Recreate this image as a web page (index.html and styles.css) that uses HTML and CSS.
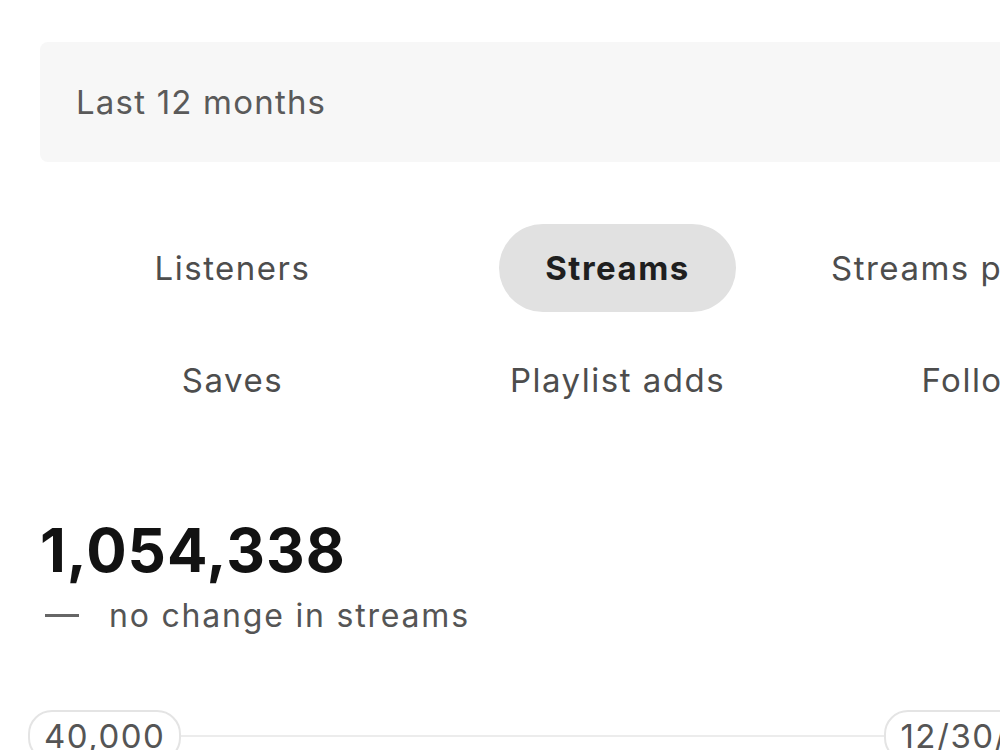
FILE: index.html
```html
<!DOCTYPE html>
<html lang="en">
<head>
    <meta charset="UTF-8">
    <meta name="viewport" content="width=device-width, initial-scale=1.0">
    <title>Stats</title>
    <link rel="stylesheet" href="styles.css">
</head>
<body>

    <div class="page">
        <div class="range-select">Last 12 months</div>

        <div class="tabs">
            <button class="tab">Listeners</button>
            <button class="tab active">Streams</button>
            <button class="tab">Streams per listener</button>
            <button class="tab">Saves</button>
            <button class="tab">Playlist adds</button>
            <button class="tab">Followers</button>
        </div>

        <div class="total">1,054,338</div>
        <div class="change">
            <span class="dash"></span>
            <span>no change in streams</span>
        </div>

        <!-- Chart top row: axis label, grid line, date marker -->
        <div class="chart-top">
            <span class="chip">40,000</span>
            <span class="grid-line"></span>
            <span class="chip date">12/30/2024</span>
        </div>
    </div>

</body>
</html>
```

FILE: styles.css
```css
body {
    margin: 0;
    background-color: #ffffff;
    font-family: Inter, "Noto Sans", sans-serif;
    color: #222;
    overflow: hidden;
}

.page {
    width: 1160px;
    padding-left: 40px;
    padding-top: 42px;
}

.range-select {
    height: 120px;
    background-color: #f7f7f7;
    border-radius: 8px 0 0 8px;
    padding-left: 36px;
    display: flex;
    align-items: center;
    font-size: 33px;
    color: #5a5a5a;
    letter-spacing: 1.2px;
}

.tabs {
    display: grid;
    grid-template-columns: repeat(3, 385px);
    grid-auto-rows: 88px;
    row-gap: 24px;
    margin-top: 62px;
}

.tab {
    justify-self: center;
    height: 88px;
    padding: 0 46px;
    border: none;
    border-radius: 44px;
    background: none;
    font-family: inherit;
    font-size: 33px;
    color: #4d4d4d;
    white-space: nowrap;
    letter-spacing: 1.5px;
}

.tab.active {
    background-color: #e1e1e1;
    color: #1f1f1f;
    font-weight: 700;
}

.total {
    margin-top: 90px;
    font-size: 60px;
    font-weight: 700;
    color: #121212;
    line-height: 72px;
    letter-spacing: 1px;
}

.change {
    display: flex;
    align-items: center;
    gap: 30px;
    margin-top: 10px;
    padding-left: 5px;
    font-size: 32px;
    color: #555;
    letter-spacing: 1.8px;
}

.dash {
    width: 34px;
    height: 3px;
    background-color: #666;
}

.chart-top {
    display: flex;
    align-items: center;
    margin-top: 75px;
    margin-left: -12px;
}

.chip {
    border: 2px solid #e4e4e4;
    border-radius: 24px;
    padding: 4px 14px;
    font-size: 33px;
    color: #555;
    letter-spacing: 1.5px;
    white-space: nowrap;
}

.grid-line {
    width: 703px;
    height: 2px;
    background-color: #ececec;
}
```
